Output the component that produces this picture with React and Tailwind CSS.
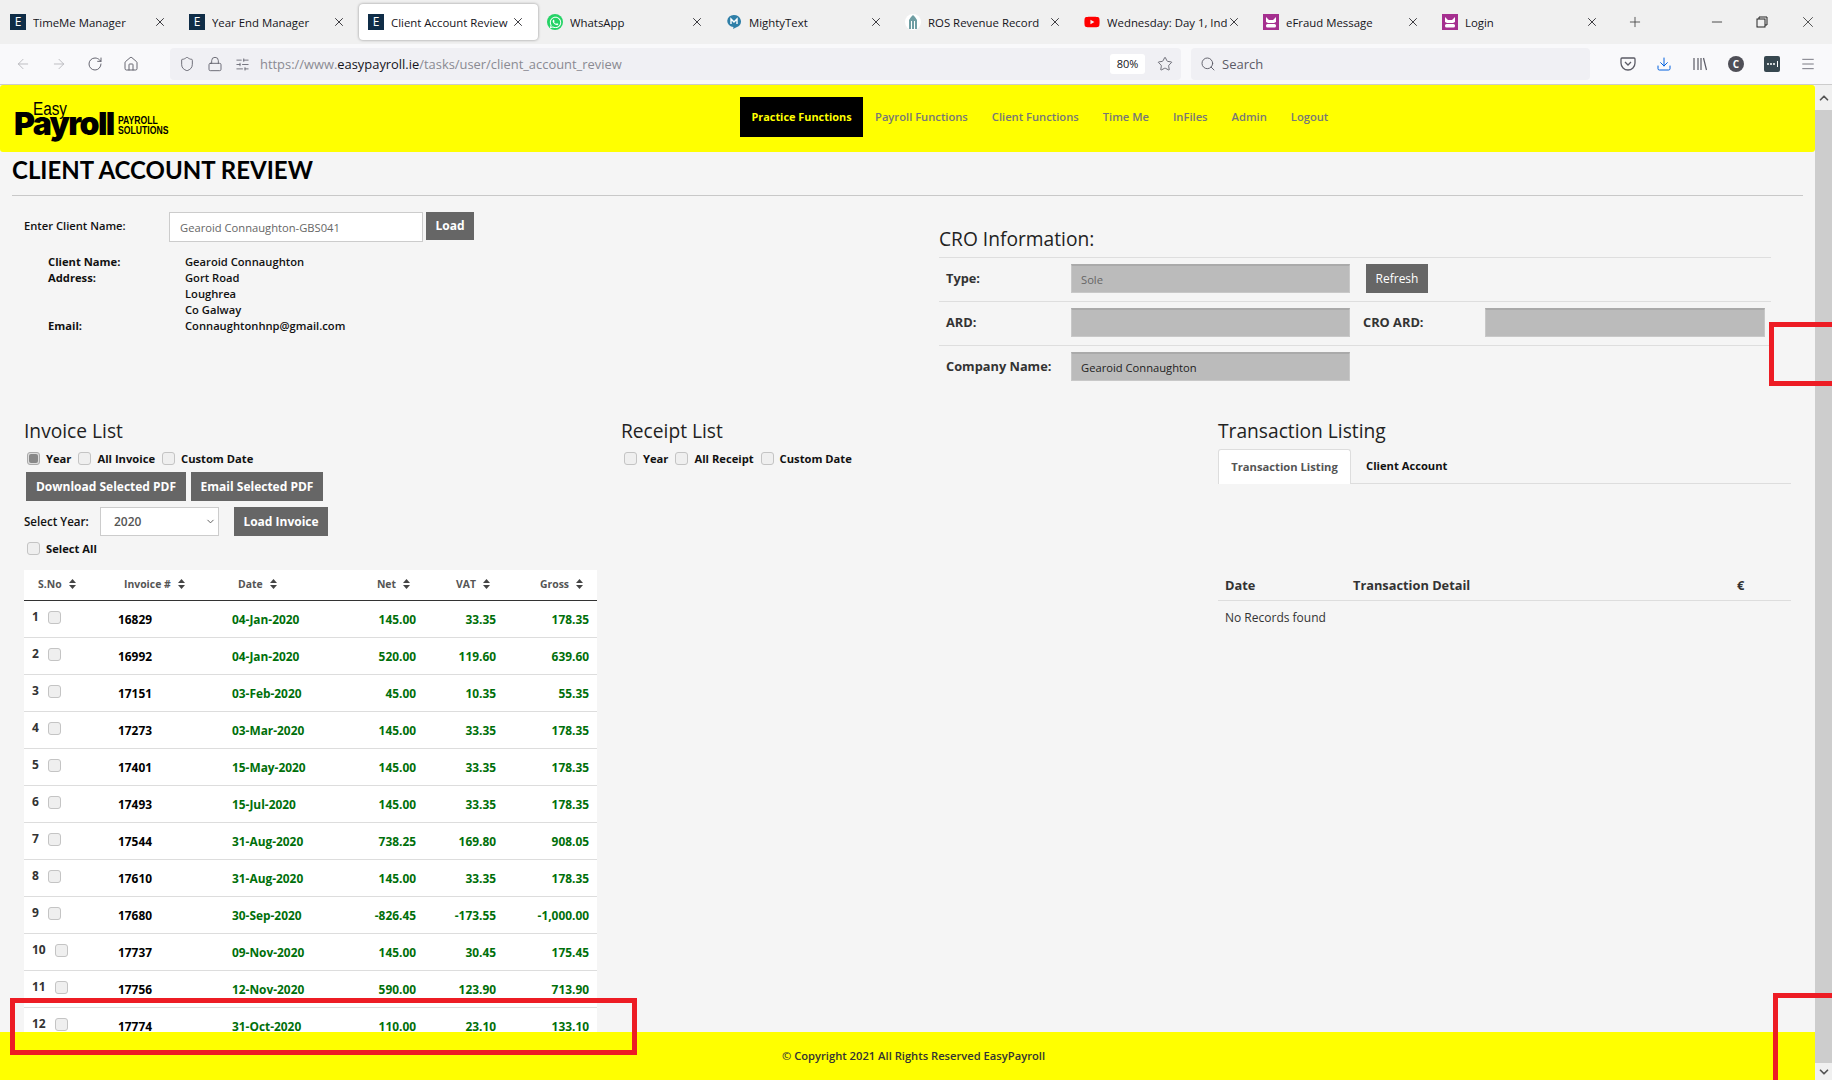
import { ArrowLeft, ArrowRight, RotateCw, Home, Shield, Lock, SlidersHorizontal, Star, Search, Download, Menu, X, Plus, Minus, ChevronDown, ChevronUp } from 'lucide-react'
import { FaWhatsapp, FaYoutube } from 'react-icons/fa'

const invoices = [
  ['1', '16829', '04-Jan-2020', '145.00', '33.35', '178.35'],
  ['2', '16992', '04-Jan-2020', '520.00', '119.60', '639.60'],
  ['3', '17151', '03-Feb-2020', '45.00', '10.35', '55.35'],
  ['4', '17273', '03-Mar-2020', '145.00', '33.35', '178.35'],
  ['5', '17401', '15-May-2020', '145.00', '33.35', '178.35'],
  ['6', '17493', '15-Jul-2020', '145.00', '33.35', '178.35'],
  ['7', '17544', '31-Aug-2020', '738.25', '169.80', '908.05'],
  ['8', '17610', '31-Aug-2020', '145.00', '33.35', '178.35'],
  ['9', '17680', '30-Sep-2020', '-826.45', '-173.55', '-1,000.00'],
  ['10', '17737', '09-Nov-2020', '145.00', '30.45', '175.45'],
  ['11', '17756', '12-Nov-2020', '590.00', '123.90', '713.90'],
  ['12', '17774', '31-Oct-2020', '110.00', '23.10', '133.10'],
]

function EIcon() {
  return (
    <span className="w-4 h-4 bg-[#0f2d47] text-white text-[12px] leading-4 text-center shrink-0">E</span>
  )
}

function PurpleIcon() {
  return (
    <svg width="16" height="16" viewBox="0 0 16 16" className="shrink-0">
      <rect width="16" height="16" fill="#a52f8f" />
      <path d="M3 3l3 3h4l3-3v5l-2 1H5L3 8z" fill="#fff" />
      <rect x="3" y="10" width="10" height="3.5" rx="1.5" fill="#fff" />
    </svg>
  )
}

const tabs = [
  { title: 'TimeMe Manager', icon: <EIcon /> },
  { title: 'Year End Manager', icon: <EIcon /> },
  { title: 'Client Account Review', icon: <EIcon />, active: true },
  {
    title: 'WhatsApp',
    icon: (
      <span className="w-4 h-4 rounded-full bg-[#25d366] flex items-center justify-center shrink-0">
        <FaWhatsapp className="text-white" size={13} />
      </span>
    ),
  },
  {
    title: 'MightyText',
    icon: (
      <svg width="16" height="16" viewBox="0 0 16 16" className="shrink-0">
        <path d="M8 1a7 6.5 0 0 1 5 11l-6 3 .5-2A6.5 6 0 0 1 8 1z" fill="#2f7fa8" />
        <path d="M5 10V5l3 3 3-3v5" stroke="#fff" strokeWidth="1.4" fill="none" />
      </svg>
    ),
  },
  {
    title: 'ROS Revenue Record',
    icon: (
      <svg width="16" height="16" viewBox="0 0 16 16" className="shrink-0">
        <rect width="16" height="16" rx="8" fill="#fff" />
        <path d="M4 15V6l2-3 2-2 2 2 2 3v9h-2V7H9v8H7V7H6v8z" fill="#6f9ea3" />
      </svg>
    ),
  },
  { title: 'Wednesday: Day 1, India', icon: <FaYoutube className="shrink-0 text-[#ff0000]" size={16} /> },
  { title: 'eFraud Message', icon: <PurpleIcon /> },
  { title: 'Login', icon: <PurpleIcon /> },
]

function Tab({ title, icon, active }) {
  return (
    <div className={`w-[179px] h-9 flex items-center pl-[9px] pr-[13px] rounded-[4px] ${active ? 'bg-white shadow-[0_0_3px_rgba(0,0,0,0.4)]' : ''}`}>
      {icon}
      <span className="ml-[7px] flex-1 min-w-0 whitespace-nowrap overflow-hidden text-[11.4px] leading-4 pt-px text-[#15141a]">{title}</span>
      <X size={14} strokeWidth={1.4} className="shrink-0 text-[#15141a]" />
    </div>
  )
}

function Box({ checked }) {
  return (
    <span className={`w-[13px] h-[13px] rounded-[3px] border shrink-0 flex items-center justify-center ${checked ? 'border-[#aaa] bg-[#ddd]' : 'border-[#c4c4c4] bg-[#efefef]'}`}>
      {checked && <span className="w-[9px] h-[9px] rounded-[2px] bg-[#888]" />}
    </span>
  )
}

function CheckItem({ label, checked }) {
  return (
    <span className="flex items-center gap-[6px]">
      <Box checked={checked} />
      <span className="font-bold">{label}</span>
    </span>
  )
}

function Btn({ children, className = '' }) {
  return (
    <button className={`bg-[#666] text-white font-bold text-[12px] flex items-center justify-center ${className}`}>
      {children}
    </button>
  )
}

function SortIcon() {
  return (
    <svg width="7" height="10" viewBox="0 0 7 10" className="inline-block ml-[7px] align-[-1px]">
      <path d="M3.5 0L7 4H0zM3.5 10L0 6h7z" fill="#444" />
    </svg>
  )
}

function CroRow({ children }) {
  return <div className="h-11 border-t border-[#dedede] flex items-start pt-[6px]">{children}</div>
}

function CroInput({ value = '', dark, className = 'w-[279px]' }) {
  return (
    <input
      readOnly
      value={value}
      className={`h-[29px] bg-[#bbb] border border-[#c8c8c8] border-t-2 border-t-[#aaa] pl-[9px] text-[11.2px] ${dark ? 'text-[#222]' : 'text-[#666]'} ${className}`}
    />
  )
}

function CroLabel({ children, className = 'w-[125px] ml-[7px]' }) {
  return <span className={`font-bold text-[12.8px] leading-[28px] text-[#333] ${className}`}>{children}</span>
}

export default function App() {
  return (
    <div className="relative h-screen overflow-hidden flex flex-col bg-[#f5f5f5] text-[11.2px] text-[#111] font-['Open_Sans',sans-serif]">
      {/* browser tabs */}
      <div className="h-11 shrink-0 bg-[#f0f0f0] flex items-center pl-px">
        {tabs.map(t => <Tab key={t.title} {...t} />)}
        <Plus size={16} strokeWidth={1.3} className="ml-[15px] text-[#444]" />
        <div className="ml-auto flex items-center gap-[30px] pr-[15px] text-[#222]">
          <Minus size={16} strokeWidth={1.2} />
          <svg width="14" height="14" viewBox="0 0 14 14" fill="none" stroke="currentColor" strokeWidth="1">
            <rect x="2" y="4" width="8" height="8" />
            <path d="M4 4V2h8v8h-2" />
          </svg>
          <X size={18} strokeWidth={1} />
        </div>
      </div>

      {/* toolbar */}
      <div className="h-[41px] shrink-0 bg-[#f9f9fb] border-b border-[#ccc] flex items-center text-[#5b5b66]">
        <div className="w-[170px] shrink-0 flex items-center pl-[15px] gap-[20px]">
          <ArrowLeft size={16} strokeWidth={1.3} className="text-[#b4b4b8]" />
          <ArrowRight size={16} strokeWidth={1.3} className="text-[#b4b4b8]" />
          <RotateCw size={16} strokeWidth={1.4} />
          <Home size={16} strokeWidth={1.4} />
        </div>
        <div className="w-[1011px] h-8 bg-[#f0f0f4] rounded-[4px] flex items-center pl-[9px] pr-[8px]">
          <Shield size={16} strokeWidth={1.3} />
          <Lock size={16} strokeWidth={1.3} className="ml-[12px]" />
          <SlidersHorizontal size={15} strokeWidth={1.3} className="ml-[12px]" />
          <span className="ml-[10px] pt-[2px] text-[12.9px] text-[#8a8a92] whitespace-nowrap">
            https://www.<span className="text-[#15141a]">easypayroll.ie</span>/tasks/user/client_account_review
          </span>
          <span className="ml-auto w-[35px] h-5 bg-white rounded-[3px] text-[11px] leading-5 text-center text-[#15141a]">80%</span>
          <Star size={16} strokeWidth={1.3} className="ml-3" />
        </div>
        <div className="ml-[10px] w-[399px] h-8 bg-[#f0f0f4] rounded-[4px] flex items-center pl-[9px] gap-[6px]">
          <Search size={16} strokeWidth={1.4} />
          <span className="pt-[2px] text-[13px] text-[#5b5b66]">Search</span>
        </div>
        <div className="ml-[30px] flex items-center gap-[20px]">
          <svg width="16" height="16" viewBox="0 0 16 16" fill="none" stroke="currentColor" strokeWidth="1.3">
            <path d="M2 2h12a1 1 0 0 1 1 1v4a7 7 0 0 1-14 0V3a1 1 0 0 1 1-1z" />
            <path d="M5 6l3 3 3-3" />
          </svg>
          <Download size={16} strokeWidth={1.5} className="text-[#0060df]" />
          <svg width="16" height="16" viewBox="0 0 16 16" fill="none" stroke="currentColor" strokeWidth="1.2">
            <path d="M2 2v12M6 2v12M9 2v12M11.5 2l3 12" />
          </svg>
          <span className="w-4 h-4 rounded-full bg-[#4f4f57] text-white text-[10px] leading-4 font-bold text-center">C</span>
          <svg width="16" height="16" viewBox="0 0 16 16">
            <rect width="16" height="16" rx="2" fill="#37474f" />
            <circle cx="4" cy="8" r="1" fill="#fff" />
            <circle cx="7" cy="8" r="1" fill="#fff" />
            <circle cx="10" cy="8" r="1" fill="#fff" />
            <rect x="13" y="5" width="1" height="6" fill="#fff" />
          </svg>
          <Menu size={16} strokeWidth={1.2} />
        </div>
      </div>

      <div className="flex-1 min-h-0 flex">
        <div className="flex-1 min-w-0 flex flex-col">
          {/* site header */}
          <header className="h-[67px] shrink-0 bg-[#ffff00] rounded-[3px] flex items-center relative">
            <div className="w-[740px] shrink-0 text-black relative h-full">
              <span className="absolute left-[33px] top-[17px] text-[18px] leading-[14px] font-['Liberation_Sans',sans-serif] scale-x-85 origin-left">Easy</span>
              <span className="absolute left-[14px] top-[26px] text-[32px] leading-[26px] font-black tracking-[-1.6px] font-['Inter',sans-serif]">Payroll</span>
              <span className="absolute left-[118px] top-[30px] text-[10.8px] leading-[10px] font-bold font-['Liberation_Sans',sans-serif] scale-x-80 origin-left whitespace-nowrap">PAYROLL<br />SOLUTIONS</span>
            </div>
            <nav className="flex items-center mb-[3px] font-semibold text-[#777]">
              <a className="w-[123px] h-10 bg-black text-[#ffff00] text-[10.9px] font-bold flex items-center justify-center">Practice Functions</a>
              {['Payroll Functions', 'Client Functions', 'Time Me', 'InFiles', 'Admin', 'Logout'].map(n => (
                <a key={n} className="h-10 px-3 flex items-center">{n}</a>
              ))}
            </nav>
          </header>

          <main className="flex-1 min-h-0 overflow-hidden">
            <div className="mx-3 h-11 border-b border-[#c8c8c8]">
              <h1 className="text-[24px] leading-[36px] font-bold text-black font-['Lato',sans-serif]">CLIENT ACCOUNT REVIEW</h1>
            </div>

            <div className="h-[222px] flex">
              {/* client details */}
              <div className="w-[939px] shrink-0 pl-6 pt-4">
                <div className="flex items-start">
                  <label className="w-[145px] font-semibold leading-[28px]">Enter Client Name:</label>
                  <input
                    readOnly
                    value="Gearoid Connaughton-GBS041"
                    className="w-[254px] h-[30px] bg-white border border-[#ccc] pl-[10px] text-[11.2px] text-[#666]"
                  />
                  <Btn className="w-12 h-[28px] ml-[3px]">Load</Btn>
                </div>
                <div className="mt-3 ml-6 grid grid-cols-[137px_1fr] leading-4 font-semibold">
                  <span className="font-bold">Client Name:</span><span>Gearoid Connaughton</span>
                  <span className="font-bold">Address:</span><span>Gort Road</span>
                  <span /><span>Loughrea</span>
                  <span /><span>Co Galway</span>
                  <span className="font-bold">Email:</span><span>Connaughtonhnp@gmail.com</span>
                </div>
              </div>

              {/* CRO information */}
              <div className="w-[832px] shrink-0 pt-[29px]">
                <h2 className="text-[19.2px] leading-[28px] mb-1 text-[#222]">CRO Information:</h2>
                <CroRow>
                  <CroLabel>Type:</CroLabel>
                  <CroInput value="Sole" />
                  <Btn className="w-[62px] h-[29px] ml-[16px] !font-normal">Refresh</Btn>
                </CroRow>
                <CroRow>
                  <CroLabel>ARD:</CroLabel>
                  <CroInput />
                  <CroLabel className="w-[122px] ml-[13px]">CRO ARD:</CroLabel>
                  <CroInput className="w-[280px]" />
                </CroRow>
                <CroRow>
                  <CroLabel>Company Name:</CroLabel>
                  <CroInput value="Gearoid Connaughton" dark />
                </CroRow>
              </div>
            </div>

            <div className="grid grid-cols-[597px_597px_597px] pl-6">
              {/* invoice list */}
              <section>
                <h2 className="text-[19.2px] leading-[26px] pb-[2px] text-[#222]">Invoice List</h2>
                <div className="h-[18px] mt-1 pl-[3px] flex items-center gap-[7px]">
                  <CheckItem label="Year" checked />
                  <CheckItem label="All Invoice" />
                  <CheckItem label="Custom Date" />
                </div>
                <div className="mt-1 pl-[2px] flex gap-[5px]">
                  <Btn className="w-[160px] h-[29px]">Download Selected PDF</Btn>
                  <Btn className="w-[132px] h-[29px]">Email Selected PDF</Btn>
                </div>
                <div className="mt-[6px] flex items-center">
                  <span className="w-[76px] font-semibold text-[11.6px]">Select Year:</span>
                  <div className="w-[119px] h-[29px] bg-white border border-[#ccc] flex items-center pl-[13px] pr-[2px] text-[12px] font-semibold text-[#555]">
                    <span className="flex-1">2020</span>
                    <ChevronDown size={11} />
                  </div>
                  <Btn className="w-[94px] h-[29px] ml-[15px]">Load Invoice</Btn>
                </div>
                <div className="h-[18px] mt-1 pl-[3px] flex items-center">
                  <CheckItem label="Select All" />
                </div>

                <table className="w-[573px] mt-3 bg-white table-fixed border-collapse">
                  <colgroup>
                    <col className="w-[86px]" />
                    <col className="w-[114px]" />
                    <col className="w-[116px]" />
                    <col className="w-[84px]" />
                    <col className="w-[80px]" />
                    <col className="w-[93px]" />
                  </colgroup>
                  <thead>
                    <tr className="h-[30px] border-b border-[#333] text-[10.4px] font-bold text-[#555]">
                      <th className="text-left pl-[14px] pt-px">S.No<SortIcon /></th>
                      <th className="text-left pl-[14px] pt-px">Invoice #<SortIcon /></th>
                      <th className="text-left pl-[14px] pt-px">Date<SortIcon /></th>
                      <th className="text-right pr-[14px] pt-px">Net<SortIcon /></th>
                      <th className="text-right pr-[14px] pt-px">VAT<SortIcon /></th>
                      <th className="text-right pr-[14px] pt-px">Gross<SortIcon /></th>
                    </tr>
                  </thead>
                  <tbody>
                    {invoices.map(row => (
                      <tr key={row[0]} className="h-[37px] border-b border-[#ddd] text-[11.9px] font-bold text-[#006f0a]">
                        <td className="pl-2 pb-[3px]">
                          <span className="flex items-center gap-[9px] text-[12px] text-[#333]">
                            {row[0]}<Box />
                          </span>
                        </td>
                        <td className="text-black pl-2 pt-[2px]">{row[1]}</td>
                        <td className="pl-2 pt-[2px]">{row[2]}</td>
                        <td className="text-right pr-2 pt-[2px]">{row[3]}</td>
                        <td className="text-right pr-2 pt-[2px]">{row[4]}</td>
                        <td className="text-right pr-2 pt-[2px]">{row[5]}</td>
                      </tr>
                    ))}
                  </tbody>
                </table>
              </section>

              {/* receipt list */}
              <section>
                <h2 className="text-[19.2px] leading-[26px] pb-[2px] text-[#222]">Receipt List</h2>
                <div className="h-[18px] mt-1 pl-[3px] flex items-center gap-[7px]">
                  <CheckItem label="Year" />
                  <CheckItem label="All Receipt" />
                  <CheckItem label="Custom Date" />
                </div>
              </section>

              {/* transaction listing */}
              <section className="w-[573px]">
                <h2 className="text-[19.2px] leading-[26px] pb-[2px] text-[#222]">Transaction Listing</h2>
                <div className="mt-[3px] h-[35px] border-b border-[#ddd] flex font-bold">
                  <a className="w-[133px] h-[35px] bg-white border border-[#ddd] border-b-0 rounded-t-[3px] flex items-center justify-center text-[#555]">Transaction Listing</a>
                  <a className="ml-[15px] pt-px flex items-center">Client Account</a>
                </div>
                <div className="mt-[86px] h-[31px] pt-px border-b border-[#ddd] grid grid-cols-[128px_384px_1fr] items-center pl-[7px] font-bold text-[12.8px] text-[#333]">
                  <span>Date</span>
                  <span>Transaction Detail</span>
                  <span>€</span>
                </div>
                <p className="pl-[7px] mt-[9px] text-[12px] leading-4 text-[#333]">No Records found</p>
              </section>
            </div>
          </main>

          <footer className="h-12 shrink-0 pl-3 bg-[#ffff00] flex items-center justify-center font-semibold text-[#333] text-[11.2px]">
            © Copyright 2021 All Rights Reserved EasyPayroll
          </footer>
        </div>

        {/* page scrollbar */}
        <div className="w-[17px] shrink-0 flex flex-col bg-[#cdcdcd]">
          <div className="h-[25px] bg-[#f0f0f0] flex items-center justify-center text-[#555]">
            <ChevronUp size={14} strokeWidth={3} />
          </div>
          <div className="flex-1" />
          <div className="h-[17px] bg-[#f0f0f0] flex items-center justify-center text-[#555]">
            <ChevronDown size={14} strokeWidth={3} />
          </div>
        </div>
      </div>

      {/* red annotation boxes on top of the screenshot */}
      <div className="absolute left-[10px] top-[998px] w-[627px] h-[57px] border-[5px] border-[#ed1c24]" />
      <div className="absolute left-[1769px] top-[322px] w-[100px] h-[64px] border-[5px] border-[#ed1c24]" />
      <div className="absolute left-[1773px] top-[993px] w-[100px] h-[200px] border-[5px] border-[#ed1c24]" />
    </div>
  )
}
